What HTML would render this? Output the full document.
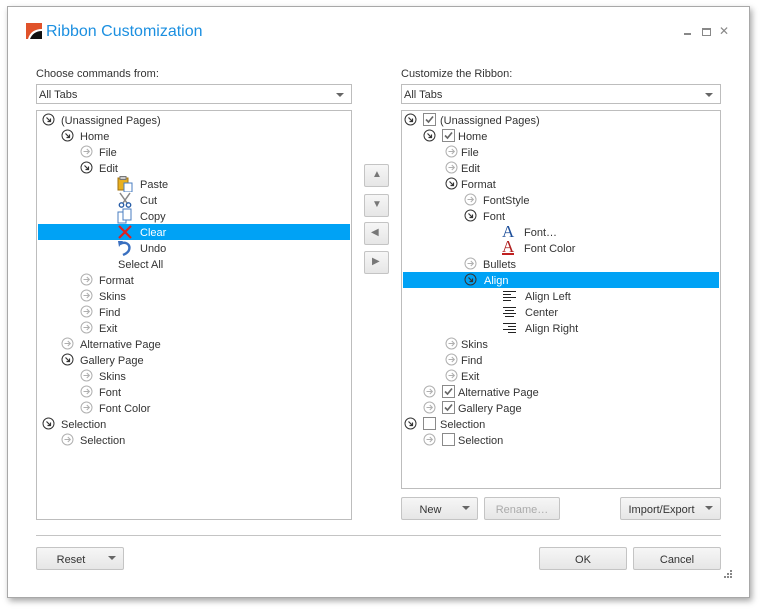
<!DOCTYPE html>
<html><head><meta charset="utf-8"><style>
*{margin:0;padding:0;box-sizing:border-box}
body{width:763px;height:612px;background:#fff;font-family:"Liberation Sans",sans-serif;font-size:11px;color:#333;position:relative;overflow:hidden}
.win{position:absolute;left:7px;top:6px;width:743px;height:592px;border:1px solid #a8a8a8;background:#fff;box-shadow:2px 3px 6px rgba(0,0,0,.35)}
.a{position:absolute;white-space:nowrap}
.box{position:absolute;border:1px solid #bdbdbd;background:#fff}
.combo{position:absolute;border:1px solid #bdbdbd;background:#fff;height:20px;line-height:16px;padding:2px 0 0 2px}
.combo:after,.btn.dd:after{content:"";position:absolute;right:7px;top:8px;border-left:4px solid transparent;border-right:4px solid transparent;border-top:4px solid #666}
.btn{position:absolute;border:1px solid #c4c4c4;border-radius:2px;background:linear-gradient(#f6f6f6,#e6e6e6);text-align:center;line-height:16px;padding-top:4px;height:23px}
.btn.dd{padding-right:18px}
.row{position:absolute;height:16px;line-height:18px;white-space:nowrap}
.sel{position:absolute;background:#00a2f5;height:16px}
svg{position:absolute}
.g{position:absolute;width:2px;height:2px;background:#888}
</style></head><body>
<div class="win"></div>
<svg style="left:26px;top:23px" width="16" height="16" viewBox="0 0 16 16"><path d="M0 0H16V6C9 6 4 9 2 16H0Z" fill="#e0522a"/><path d="M16 8V16H4C6 11 10 8 16 8Z" fill="#111"/></svg>
<div class="a" style="left:46px;top:23px;font-size:16px;color:#1b8fe0">Ribbon Customization</div>
<div class="a" style="left:684px;top:33px;width:7px;height:2px;background:#888"></div>
<div class="a" style="left:702px;top:28px;width:9px;height:8px;border:1px solid #888;border-top-width:2px"></div>
<div class="a" style="left:719px;top:24px;color:#888;font-size:12px">✕</div>

<div class="a" style="left:36px;top:68px">Choose commands from:</div>
<div class="combo" style="left:36px;top:84px;width:316px">All Tabs</div>
<div class="box" style="left:36px;top:110px;width:316px;height:410px"></div>
<div class="a" style="left:401px;top:68px">Customize the Ribbon:</div>
<div class="combo" style="left:401px;top:84px;width:320px">All Tabs</div>
<div class="box" style="left:401px;top:110px;width:320px;height:379px"></div>

<div class="sel" style="left:38px;top:224px;width:312px"></div>
<div class="sel" style="left:403px;top:272px;width:316px"></div>

<svg width="0" height="0"><defs>
<g id="ex"><circle cx="6.5" cy="6.5" r="5.5" fill="none" stroke="#333"/><path d="M4.5 4.5L8.5 8.5M8.5 5.5V8.5H5.5" fill="none" stroke="#333" stroke-width="1.2"/></g>
<g id="co"><circle cx="6.5" cy="6.5" r="5.5" fill="none" stroke="#b0b0b0"/><path d="M3.5 6.5H9.2M6.8 4L9.3 6.5L6.8 9" fill="none" stroke="#b0b0b0" stroke-width="1.1"/></g>
<g id="cb"><rect x="0.5" y="0.5" width="12" height="12" fill="#fff" stroke="#8a8a8a"/><path d="M3 6.5L5.5 9L10 3.5" fill="none" stroke="#666" stroke-width="1.6"/></g>
<g id="cbe"><rect x="0.5" y="0.5" width="12" height="12" fill="#fff" stroke="#8a8a8a"/></g>
</defs></svg>

<svg style="left:42px;top:113px" width="13" height="13"><use href="#ex"/></svg><div class="row" style="left:61px;top:112px">(Unassigned Pages)</div>
<svg style="left:61px;top:129px" width="13" height="13"><use href="#ex"/></svg><div class="row" style="left:80px;top:128px">Home</div>
<svg style="left:80px;top:145px" width="13" height="13"><use href="#co"/></svg><div class="row" style="left:99px;top:144px">File</div>
<svg style="left:80px;top:161px" width="13" height="13"><use href="#ex"/></svg><div class="row" style="left:99px;top:160px">Edit</div>
<svg style="left:117px;top:176px" width="16" height="16"><rect x="1" y="2" width="10" height="12" fill="#e8b020" stroke="#a07010"/><rect x="3" y="0.5" width="6" height="3" fill="#ccc" stroke="#777"/><rect x="7" y="7" width="8" height="9" fill="#fff" stroke="#4a7ec0"/></svg><div class="row" style="left:140px;top:176px">Paste</div>
<svg style="left:117px;top:192px" width="16" height="16"><path d="M3 1L10 11M13 1L6 11" stroke="#888" stroke-width="1.5"/><circle cx="4.5" cy="13" r="2.2" fill="none" stroke="#2a5fa8" stroke-width="1.4"/><circle cx="11.5" cy="13" r="2.2" fill="none" stroke="#2a5fa8" stroke-width="1.4"/></svg><div class="row" style="left:140px;top:192px">Cut</div>
<svg style="left:117px;top:208px" width="16" height="16"><rect x="1" y="4" width="8" height="11" fill="#fff" stroke="#4a7ec0"/><rect x="6" y="1" width="8" height="11" fill="#fff" stroke="#4a7ec0"/></svg><div class="row" style="left:140px;top:208px">Copy</div>
<svg style="left:117px;top:224px" width="16" height="16"><path d="M2 2L14 14M14 2L2 14" stroke="#e02020" stroke-width="2.2"/></svg><div class="row" style="left:140px;top:224px;color:#fff">Clear</div>
<svg style="left:117px;top:240px" width="16" height="16"><path d="M3 4C8 1 14 4 12 10C11 13 8 14 6 15" fill="none" stroke="#3a70c0" stroke-width="2.4"/><path d="M1 1L6 1L2 7Z" fill="#3a70c0"/></svg><div class="row" style="left:140px;top:240px">Undo</div>
<div class="row" style="left:118px;top:256px">Select All</div>
<svg style="left:80px;top:273px" width="13" height="13"><use href="#co"/></svg><div class="row" style="left:99px;top:272px">Format</div>
<svg style="left:80px;top:289px" width="13" height="13"><use href="#co"/></svg><div class="row" style="left:99px;top:288px">Skins</div>
<svg style="left:80px;top:305px" width="13" height="13"><use href="#co"/></svg><div class="row" style="left:99px;top:304px">Find</div>
<svg style="left:80px;top:321px" width="13" height="13"><use href="#co"/></svg><div class="row" style="left:99px;top:320px">Exit</div>
<svg style="left:61px;top:337px" width="13" height="13"><use href="#co"/></svg><div class="row" style="left:80px;top:336px">Alternative Page</div>
<svg style="left:61px;top:353px" width="13" height="13"><use href="#ex"/></svg><div class="row" style="left:80px;top:352px">Gallery Page</div>
<svg style="left:80px;top:369px" width="13" height="13"><use href="#co"/></svg><div class="row" style="left:99px;top:368px">Skins</div>
<svg style="left:80px;top:385px" width="13" height="13"><use href="#co"/></svg><div class="row" style="left:99px;top:384px">Font</div>
<svg style="left:80px;top:401px" width="13" height="13"><use href="#co"/></svg><div class="row" style="left:99px;top:400px">Font Color</div>
<svg style="left:42px;top:417px" width="13" height="13"><use href="#ex"/></svg><div class="row" style="left:61px;top:416px">Selection</div>
<svg style="left:61px;top:433px" width="13" height="13"><use href="#co"/></svg><div class="row" style="left:80px;top:432px">Selection</div>

<div class="btn" style="left:364px;top:164px;width:25px;height:23px"></div><div class="a" style="left:372px;top:169px;color:#777;font-size:10px">▲</div>
<div class="btn" style="left:364px;top:194px;width:25px;height:23px"></div><div class="a" style="left:372px;top:199px;color:#777;font-size:10px">▼</div>
<div class="btn" style="left:364px;top:222px;width:25px;height:23px"></div><div class="a" style="left:371px;top:227px;color:#777;font-size:10px">◀</div>
<div class="btn" style="left:364px;top:251px;width:25px;height:23px"></div><div class="a" style="left:372px;top:256px;color:#777;font-size:10px">▶</div>

<svg style="left:404px;top:113px" width="13" height="13"><use href="#ex"/></svg><svg style="left:423px;top:113px" width="13" height="13"><use href="#cb"/></svg><div class="row" style="left:440px;top:112px">(Unassigned Pages)</div>
<svg style="left:423px;top:129px" width="13" height="13"><use href="#ex"/></svg><svg style="left:442px;top:129px" width="13" height="13"><use href="#cb"/></svg><div class="row" style="left:458px;top:128px">Home</div>
<svg style="left:445px;top:145px" width="13" height="13"><use href="#co"/></svg><div class="row" style="left:461px;top:144px">File</div>
<svg style="left:445px;top:161px" width="13" height="13"><use href="#co"/></svg><div class="row" style="left:461px;top:160px">Edit</div>
<svg style="left:445px;top:177px" width="13" height="13"><use href="#ex"/></svg><div class="row" style="left:461px;top:176px">Format</div>
<svg style="left:464px;top:193px" width="13" height="13"><use href="#co"/></svg><div class="row" style="left:483px;top:192px">FontStyle</div>
<svg style="left:464px;top:209px" width="13" height="13"><use href="#ex"/></svg><div class="row" style="left:483px;top:208px">Font</div>
<div class="a" style="left:502px;top:223px;font-family:'Liberation Serif',serif;font-size:17px;line-height:18px;color:#1e4f9a">A</div><div class="row" style="left:524px;top:224px">Font…</div>
<div class="a" style="left:502px;top:239px;font-family:'Liberation Serif',serif;font-size:17px;color:#b02020;border-bottom:2px solid #c02020;line-height:15px;height:16px">A</div><div class="row" style="left:524px;top:240px">Font Color</div>
<svg style="left:464px;top:257px" width="13" height="13"><use href="#co"/></svg><div class="row" style="left:483px;top:256px">Bullets</div>
<svg style="left:464px;top:273px" width="13" height="13"><use href="#ex"/></svg><div class="row" style="left:484px;top:272px;color:#fff">Align</div>
<svg style="left:503px;top:291px" width="13" height="10"><path d="M0 .5H13M0 3.5H8M0 6.5H13M0 9.5H8" stroke="#222"/></svg><div class="row" style="left:525px;top:288px">Align Left</div>
<svg style="left:503px;top:307px" width="13" height="10"><path d="M0 .5H13M2 3.5H11M0 6.5H13M2 9.5H11" stroke="#222"/></svg><div class="row" style="left:525px;top:304px">Center</div>
<svg style="left:503px;top:323px" width="13" height="10"><path d="M0 .5H13M5 3.5H13M0 6.5H13M5 9.5H13" stroke="#222"/></svg><div class="row" style="left:525px;top:320px">Align Right</div>
<svg style="left:445px;top:337px" width="13" height="13"><use href="#co"/></svg><div class="row" style="left:461px;top:336px">Skins</div>
<svg style="left:445px;top:353px" width="13" height="13"><use href="#co"/></svg><div class="row" style="left:461px;top:352px">Find</div>
<svg style="left:445px;top:369px" width="13" height="13"><use href="#co"/></svg><div class="row" style="left:461px;top:368px">Exit</div>
<svg style="left:423px;top:385px" width="13" height="13"><use href="#co"/></svg><svg style="left:442px;top:385px" width="13" height="13"><use href="#cb"/></svg><div class="row" style="left:458px;top:384px">Alternative Page</div>
<svg style="left:423px;top:401px" width="13" height="13"><use href="#co"/></svg><svg style="left:442px;top:401px" width="13" height="13"><use href="#cb"/></svg><div class="row" style="left:458px;top:400px">Gallery Page</div>
<svg style="left:404px;top:417px" width="13" height="13"><use href="#ex"/></svg><svg style="left:423px;top:417px" width="13" height="13"><use href="#cbe"/></svg><div class="row" style="left:440px;top:416px">Selection</div>
<svg style="left:423px;top:433px" width="13" height="13"><use href="#co"/></svg><svg style="left:442px;top:433px" width="13" height="13"><use href="#cbe"/></svg><div class="row" style="left:458px;top:432px">Selection</div>

<div class="btn dd" style="left:401px;top:497px;width:77px">New</div>
<div class="btn" style="left:484px;top:497px;width:76px;color:#aaa">Rename…</div>
<div class="btn dd" style="left:620px;top:497px;width:101px">Import/Export</div>
<div class="a" style="left:36px;top:535px;width:685px;height:1px;background:#c4c4c4"></div>
<div class="btn dd" style="left:36px;top:547px;width:88px">Reset</div>
<div class="btn" style="left:539px;top:547px;width:88px">OK</div>
<div class="btn" style="left:633px;top:547px;width:88px">Cancel</div>
<div class="g" style="left:730px;top:570px"></div>
<div class="g" style="left:727px;top:573px"></div><div class="g" style="left:730px;top:573px"></div>
<div class="g" style="left:724px;top:576px"></div><div class="g" style="left:727px;top:576px"></div><div class="g" style="left:730px;top:576px"></div>
</body></html>
